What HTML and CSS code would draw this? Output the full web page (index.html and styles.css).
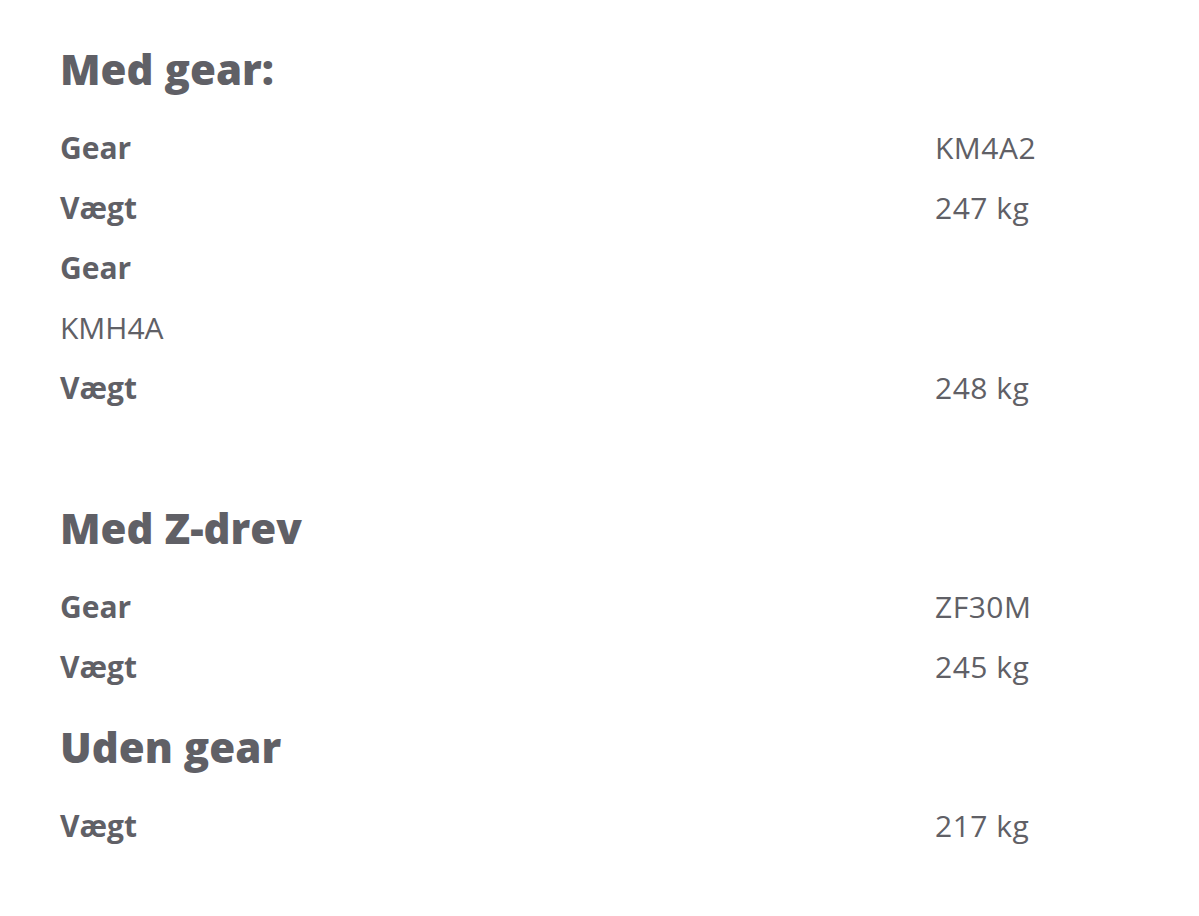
FILE: index.html
```html
<!DOCTYPE html>
<html lang="da">
<head>
<meta charset="utf-8">
<title>Vægt</title>
<link rel="stylesheet" href="styles.css">
</head>
<body>
<main class="specs">
  <section class="group group--spaced">
    <h2 class="group__title">Med gear:</h2>
    <div class="rows">
      <div class="row"><span class="row__label">Gear</span><span class="row__value">KM4A2</span></div>
      <div class="row"><span class="row__label">Vægt</span><span class="row__value">247 kg</span></div>
      <div class="row"><span class="row__label">Gear</span><span class="row__value"></span></div>
      <div class="row"><span class="row__plain">KMH4A</span><span class="row__value"></span></div>
      <div class="row"><span class="row__label">Vægt</span><span class="row__value">248 kg</span></div>
    </div>
  </section>
  <section class="group">
    <h2 class="group__title">Med Z-drev</h2>
    <div class="rows">
      <div class="row"><span class="row__label">Gear</span><span class="row__value">ZF30M</span></div>
      <div class="row"><span class="row__label">Vægt</span><span class="row__value">245 kg</span></div>
    </div>
  </section>
  <section class="group">
    <h2 class="group__title">Uden gear</h2>
    <div class="rows">
      <div class="row"><span class="row__label">Vægt</span><span class="row__value">217 kg</span></div>
    </div>
  </section>
</main>
</body>
</html>
```
FILE: styles.css
```css
html, body {
  margin: 0;
  padding: 0;
  background: #ffffff;
}

body {
  font-family: "Open Sans", "Noto Sans", sans-serif;
  color: #606066;
}

.specs {
  padding: 19px 60px 0 60px;
  display: flex;
  flex-direction: column;
}

.group {
  display: flex;
  flex-direction: column;
}

.group--spaced {
  margin-bottom: 60px;
}

.group__title {
  margin: 25px 0 24px 0;
  font-size: 42px;
  line-height: 50px;
  font-weight: 800;
  color: #606066;
}

.rows {
  display: flex;
  flex-direction: column;
}

.row {
  display: grid;
  grid-template-columns: 875px 1fr;
  height: 60px;
  line-height: 60px;
  font-size: 30px;
}

.row__label {
  font-weight: 700;
}

.row__plain {
  font-weight: 400;
}

.row__value {
  font-weight: 400;
  letter-spacing: 0.5px;
}
```
